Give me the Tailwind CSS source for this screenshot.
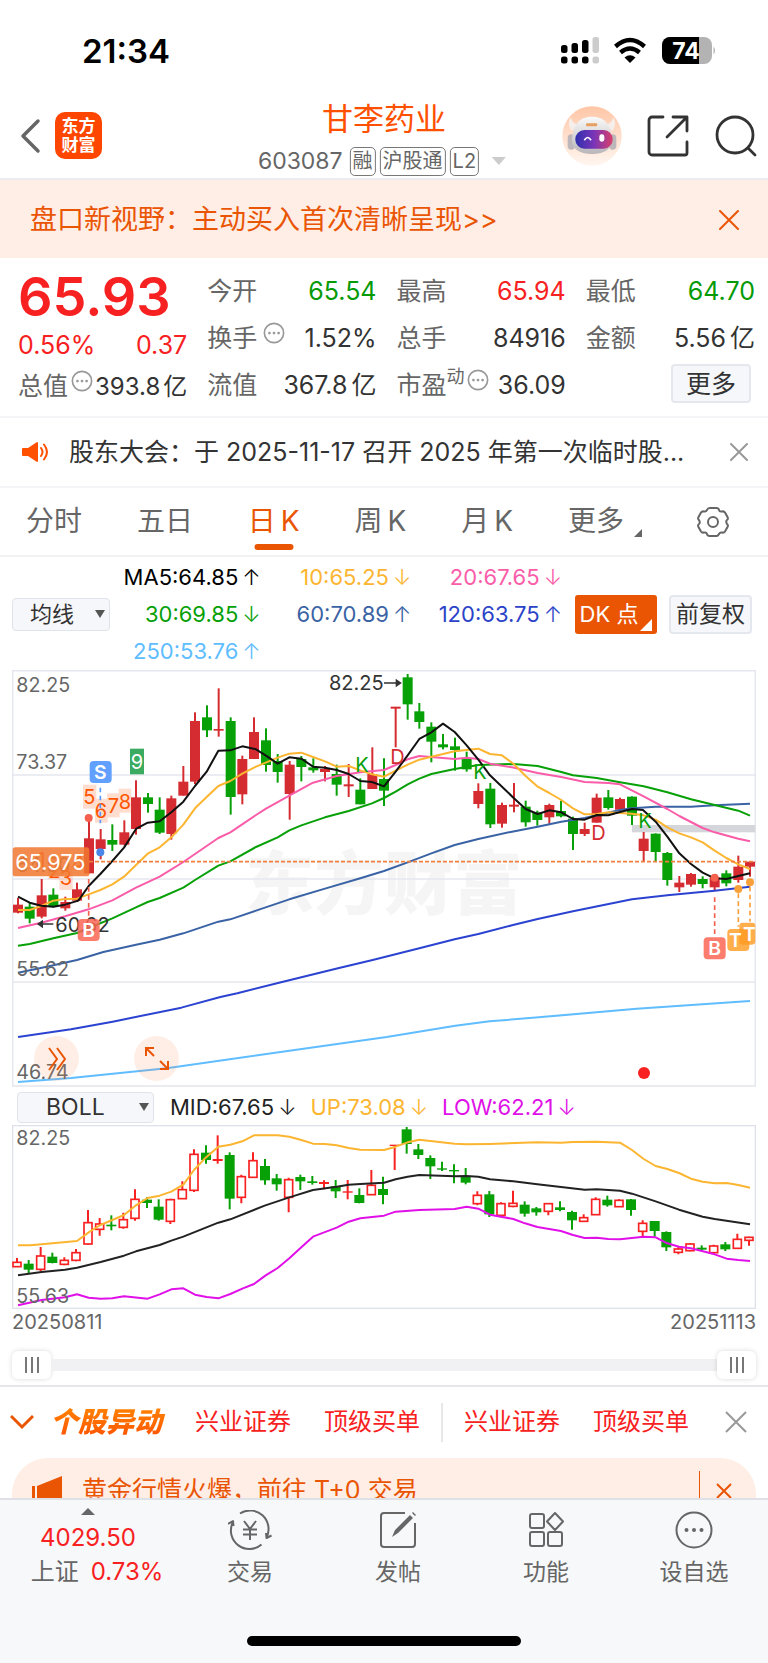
<!DOCTYPE html>
<html lang="zh-CN">
<head>
<meta charset="utf-8">
<meta name="viewport" content="width=device-width, initial-scale=1">
<title>甘李药业 603087</title>
<script src="https://cdn.jsdelivr.net/npm/@tailwindcss/browser@4"></script>
</head>
<body class="bg-white font-['Inter','Noto_Sans_CJK_SC',sans-serif] text-[#333]">

<!-- Status bar -->
<div class="flex h-[95px] items-center justify-between pt-[9px] pr-[52px] pl-[82px]">
  <span class="text-[33px] font-semibold text-black">21:34</span>
  <svg viewBox="0 0 156 30" class="mt-[-2px] w-[156px]" aria-label="信号 Wi-Fi 电量 74%">
    <g fill="#000">
      <rect x="1" y="9" width="6.500" height="8" rx="2.500"/><rect x="11.500" y="7" width="6.500" height="10" rx="2.500"/><rect x="22" y="4" width="6.500" height="13" rx="2.500"/>
      <rect x="1" y="20.500" width="6.500" height="7" rx="2.500"/><rect x="11.500" y="20.500" width="6.500" height="7" rx="2.500"/><rect x="22" y="20.500" width="6.500" height="7" rx="2.500"/>
    </g>
    <g fill="#ccc"><rect x="32.500" y="1" width="6.500" height="16" rx="2.500"/><rect x="32.500" y="20.500" width="6.500" height="7" rx="2.500"/></g>
    <g fill="none" stroke="#000" stroke-width="4.400"><path d="M55.500 10.500Q70 -2.500 84.500 10.500"/><path d="M60.500 16.500Q70 8.500 79.500 16.500"/></g>
    <path d="M64.500 21.500Q70 17 75.500 21.500L70 27Z" fill="#000"/>
    <clipPath id="bat"><rect x="102" y="1" width="50" height="27" rx="8"/></clipPath>
    <g clip-path="url(#bat)"><rect x="102" y="1" width="50" height="27" fill="#b3b3b3"/><rect x="102" y="1" width="37" height="27" fill="#000"/></g>
    <path d="M153.500 10.500Q156.500 14.500 153.500 18.500Z" fill="#b3b3b3"/>
    <text x="126" y="23" text-anchor="middle" font-size="23" font-weight="700" fill="#fff">74</text>
  </svg>
</div>

<!-- Title bar -->
<header class="relative flex h-[85px] items-center justify-between border-b-2 border-[#ececf0] pr-[11px] pb-[2px] pl-[20px]">
  <div class="flex items-center gap-[14px]">
    <button aria-label="返回"><svg viewBox="0 0 21 36" class="w-[21px]" fill="none" stroke="#666" stroke-width="3.500" stroke-linecap="round" stroke-linejoin="round"><path d="M18 3 3 18l15 15"/></svg></button>
    <a href="#" class="flex size-[47px] flex-col items-center justify-center rounded-[10px] bg-[#ff4600] text-[17px] leading-[19px] font-bold text-white"><span>东方</span><span>财富</span></a>
  </div>
  <div class="absolute top-[4px] left-1/2 flex -translate-x-1/2 flex-col items-center">
    <h1 class="text-[31px] leading-[40px] text-[#ff5000]">甘李药业</h1>
    <button class="mt-[3px] flex items-center gap-[4px] pr-[4px] text-[#666]">
      <span class="mr-[3px] text-[23px] leading-[38px]">603087</span>
      <span class="rounded-[5px] border border-[#777] px-[2px] text-[20px] leading-[27px]">融</span>
      <span class="rounded-[5px] border border-[#777] px-[2px] text-[20px] leading-[27px]">沪股通</span>
      <span class="rounded-[5px] border border-[#777] px-[2px] text-[20px] leading-[27px]">L2</span>
      <svg viewBox="0 0 14 8" class="ml-[9px] w-[14px]"><path d="M0 0h14L7 8Z" fill="#ccc"/></svg>
    </button>
  </div>
  <div class="flex items-center">
    <button aria-label="智能助手"><svg viewBox="0 0 180 180" class="w-[60px]">
      <defs><linearGradient id="halo" x2="0" y2="1"><stop stop-color="#ffc6a6"/><stop offset="1" stop-color="#fff6f1"/></linearGradient>
      <linearGradient id="visor"><stop stop-color="#2f2fae"/><stop offset=".5" stop-color="#7a35b8"/><stop offset="1" stop-color="#d8416a"/></linearGradient>
      <linearGradient id="shell" x2="0" y2="1"><stop stop-color="#fafafa"/><stop offset="1" stop-color="#b9b5b9"/></linearGradient></defs>
      <circle cx="90" cy="90" r="89" fill="url(#halo)"/>
      <path d="M26 34q-12 18 2 40l26-16q-24-4-28-24ZM154 34q12 18-2 40l-26-16q24-4 28-24Z" fill="#f5eeea"/>
      <rect x="17" y="85" width="22" height="46" rx="11" fill="#bdb7bb"/><rect x="141" y="85" width="22" height="46" rx="11" fill="#bdb7bb"/>
      <path d="M30 100Q34 32 90 32t60 68q0 44-60 44T30 100Z" fill="url(#shell)"/>
      <rect x="72" y="52" width="34" height="9" rx="4" fill="#e8a060"/>
      <rect x="40" y="72" width="112" height="56" rx="27" fill="url(#visor)"/>
      <path d="M68 101q9-13 18 0" fill="none" stroke="#fff" stroke-width="5" stroke-linecap="round"/><rect x="112" y="85" width="15" height="22" rx="7" fill="#fff"/>
    </svg></button>
    <button aria-label="分享" class="ml-[25px]"><svg viewBox="0 0 42 42" class="w-[42px]" fill="none" stroke="#333" stroke-width="2.800" stroke-linecap="round" stroke-linejoin="round"><path d="M16 2H5a3 3 0 0 0-3 3v32a3 3 0 0 0 3 3h33a2 2 0 0 0 2-2V27M26 2h14v14M40 2 20 22"/></svg></button>
    <button aria-label="搜索" class="ml-[26px]"><svg viewBox="0 0 42 42" class="w-[42px]" fill="none" stroke="#333" stroke-width="2.800" stroke-linecap="round"><circle cx="20" cy="20" r="18"/><path d="m33 33 7 7"/></svg></button>
  </div>
</header>

<!-- Promo strip -->
<div class="flex h-[78px] items-center justify-between bg-[#feeee6] pt-[2px] pr-[29px] pl-[30px] text-[27px] text-[#ea5504]">
  <a href="#">盘口新视野：主动买入首次清晰呈现&gt;&gt;</a>
  <button aria-label="关闭"><svg viewBox="0 0 20 20" class="w-[20px]" stroke="#ea5504" stroke-width="2" stroke-linecap="round"><path d="m1 1 18 18M19 1 1 19"/></svg></button>
</div>

<!-- Quote -->
<section class="grid grid-cols-4 gap-x-[20px] border-b-2 border-[#f5f5f7] pt-[10px] pr-[13px] pb-[7px] pl-[18px] text-[25px] leading-[47px] whitespace-nowrap">
  <div class="text-[#f82121]">
    <div class="text-[54px] leading-[58px] font-semibold">65.93</div>
    <div class="flex justify-between leading-[38px]"><span>0.56%</span><span>0.37</span></div>
    <div class="flex items-center justify-between leading-[45px] text-[#333]"><span class="text-[#666]">总值</span><svg viewBox="0 0 24 24" class="mb-[11px] w-[22px]" fill="#999"><circle cx="12" cy="12" r="10.500" fill="none" stroke="#999" stroke-width="1.800"/><circle cx="7" cy="12" r="1.500"/><circle cx="12" cy="12" r="1.500"/><circle cx="17" cy="12" r="1.500"/></svg><span class="text-[24px]">393.8<span class="ml-[3px]">亿</span></span></div>
  </div>
  <div>
    <div class="flex justify-between"><span class="text-[#666]">今开</span><span class="text-[#069a06]">65.54</span></div>
    <div class="flex items-center"><span class="text-[#666]">换手</span><svg viewBox="0 0 24 24" class="mb-[11px] ml-[6px] w-[22px]" fill="#999"><circle cx="12" cy="12" r="10.500" fill="none" stroke="#999" stroke-width="1.800"/><circle cx="7" cy="12" r="1.500"/><circle cx="12" cy="12" r="1.500"/><circle cx="17" cy="12" r="1.500"/></svg><span class="ml-auto">1.52%</span></div>
    <div class="flex justify-between"><span class="text-[#666]">流值</span><span>367.8<span class="ml-[4px]">亿</span></span></div>
  </div>
  <div>
    <div class="flex justify-between"><span class="text-[#666]">最高</span><span class="text-[#f82121]">65.94</span></div>
    <div class="flex justify-between"><span class="text-[#666]">总手</span><span>84916</span></div>
    <div class="flex items-center"><span class="text-[#666]">市盈</span><span class="mb-[18px] text-[18px] leading-[29px] text-[#666]">动</span><svg viewBox="0 0 24 24" class="mb-[11px] ml-[2px] w-[22px]" fill="#999"><circle cx="12" cy="12" r="10.500" fill="none" stroke="#999" stroke-width="1.800"/><circle cx="7" cy="12" r="1.500"/><circle cx="12" cy="12" r="1.500"/><circle cx="17" cy="12" r="1.500"/></svg><span class="ml-auto">36.09</span></div>
  </div>
  <div>
    <div class="flex justify-between"><span class="text-[#666]">最低</span><span class="text-[#069a06]">64.70</span></div>
    <div class="flex justify-between"><span class="text-[#666]">金额</span><span>5.56<span class="ml-[4px]">亿</span></span></div>
    <div class="flex justify-end pt-[2px] pr-[4px]"><button class="h-[39px] w-[80px] rounded-[4px] border-2 border-[#e4e8ee] bg-[#f6f7fa] leading-[34px]">更多</button></div>
  </div>
</section>

<!-- Notice -->
<div class="flex items-center border-b-2 border-[#f5f5f7] pr-[20px] pl-[21px] leading-[68px]">
  <svg viewBox="0 0 28 22" class="mr-[20px] w-[28px]" fill="#ff5000"><path d="M2 7h5l9-6q1 0 1 1v18q0 1-1 1l-9-6H2q-1 0-1-1V8q0-1 1-1Z"/><path d="M20 7q3 4 0 8M23 3.500q6 7.500 0 15" fill="none" stroke="#ff5000" stroke-width="2" stroke-linecap="round"/></svg>
  <a href="#" class="min-w-0 flex-1 truncate text-[25px]">股东大会：于 2025-11-17 召开 2025 年第一次临时股...</a>
  <button aria-label="关闭通知"><svg viewBox="0 0 18 18" class="w-[18px]" stroke="#999" stroke-width="2" stroke-linecap="round"><path d="m1 1 16 16M17 1 1 17"/></svg></button>
</div>

<!-- Period tabs -->
<nav class="flex items-center justify-between border-b-2 border-[#f3f3f5] pr-[39px] pl-[26px] text-[28px] leading-[67px] text-[#666]">
  <button>分时</button>
  <button>五日</button>
  <button class="relative flex gap-[5px] text-[#ea5504]">日<span>K</span><span class="absolute bottom-[5px] left-1/2 h-[6px] w-[39px] -translate-x-1/2 rounded-full bg-[#ea5504]"></span></button>
  <button class="flex gap-[5px]">周<span>K</span></button>
  <button class="flex gap-[5px]">月<span>K</span></button>
  <button class="flex items-center">更多<svg viewBox="0 0 9 9" class="mt-[22px] ml-[10px] w-[8px]"><path d="M9 0v9H0Z" fill="#666"/></svg></button>
  <button aria-label="设置"><svg viewBox="0 0 32 32" class="w-[32px]" fill="none" stroke="#666" stroke-width="2" stroke-linejoin="round"><path d="M12.500 2h7q2 0 2.500 2t3 1.500q2-.500 3 1l2.500 4.500q1 2-.500 3t0 4q1.500 1 .500 3L28 25.500q-1 1.500-3 1t-3 1.500-2.500 2h-7q-2 0-2.500-2t-3-1.500q-2 .500-3-1L1.500 21q-1-2 .500-3t0-4q-1.500-1-.500-3L4 6.500q1-1.500 3-1T10 4t2.500-2Z"/><circle cx="16" cy="16" r="5"/></svg></button>
</nav>

<!-- Moving averages -->
<section class="flex items-center pt-[2px] pr-[16px] pl-[12px] text-[22px]">
  <label class="relative"><span class="sr-only">主图指标</span>
    <select class="block h-[33px] w-[98px] appearance-none rounded-[4px] border border-[#dfe3ea] bg-[#f6f7fa] pl-[17px] leading-[31px]"><option>均线</option></select>
    <svg viewBox="0 0 10 8" class="pointer-events-none absolute top-[12px] right-[5px] w-[10px]"><path d="M0 0h10L5 8Z" fill="#555"/></svg>
  </label>
  <div class="grid flex-1 grid-cols-3 text-right leading-[37px] whitespace-nowrap">
    <span class="text-black">MA5:64.85<span class="ml-[4px] font-light">↑</span></span><span class="text-[#fcb530]">10:65.25<span class="ml-[4px] font-light">↓</span></span><span class="text-[#f95ca8]">20:67.65<span class="ml-[4px] font-light">↓</span></span>
    <span class="text-[#07a007]">30:69.85<span class="ml-[4px] font-light">↓</span></span><span class="text-[#3a63a5]">60:70.89<span class="ml-[4px] font-light">↑</span></span><span class="text-[#2b43c8]">120:63.75<span class="ml-[4px] font-light">↑</span></span>
    <span class="text-[#60bdff]">250:53.76<span class="ml-[4px] font-light">↑</span></span>
  </div>
  <button class="relative ml-[13px] h-[39px] w-[82px] rounded-[3px] bg-[#ea5504] pr-[14px] whitespace-nowrap text-white">DK 点<svg viewBox="0 0 12 12" class="absolute right-[5px] bottom-[3px] w-[12px]"><path d="M12 0v12H0Z" fill="#fff"/></svg></button>
  <button class="ml-[12px] h-[39px] w-[83px] rounded-[4px] border-2 border-[#e4e8ee] bg-[#f6f7fa] text-[23px] whitespace-nowrap">前复权</button>
</section>

<!-- Daily candles -->
<section class="relative mx-[12px]">
  <svg viewBox="36 30 2232 1250" class="block w-full" id="kline" role="img" aria-label="日K线图">
    <g fill="#f5f5f5" font-family="'Noto Sans CJK SC'"><text x="735" y="748" font-size="208" font-weight="900">东方财富</text></g>
    <g stroke="#e6e8ef" stroke-width="5" fill="none"><path d="M36 345H2268M36 657H2268M36 966H2268"/><rect x="38" y="32" width="2228" height="1246"/></g>
    <rect x="1896" y="495" width="370" height="22" fill="#d4d6db"/>
    <g data-candles></g><g data-lines></g>
    <path d="M267 605H2266" stroke="#f08040" stroke-width="5" stroke-dasharray="12 6"/>
    <g fill="#666" font-size="59"><text x="49" y="97">82.25</text><text x="49" y="327">73.37</text><text x="49" y="637">64.50</text><text x="49" y="948">55.62</text><text x="49" y="1257">46.74</text></g>
    <g fill="#ff7a45" opacity=".25"><rect x="249" y="374" width="40" height="72"/><rect x="285" y="416" width="38" height="72"/><rect x="321" y="400" width="38" height="72"/><rect x="356" y="386" width="38" height="72"/><rect x="145" y="590" width="38" height="68"/><rect x="178" y="618" width="40" height="72"/></g>
    <g fill="#ff5500" font-size="60"><text x="250" y="432">5</text><text x="284" y="474">6</text><text x="323" y="458">7</text><text x="356" y="447">8</text><text x="112" y="622">1</text><text x="145" y="655">2</text><text x="179" y="675">3</text><text x="215" y="630">4</text></g>
    <rect x="390" y="266" width="42" height="77" fill="#3cab62"/><text x="411" y="326" text-anchor="middle" font-size="60" fill="#fff">9</text>
    <g fill="#333" font-size="60"><text x="987" y="91">82.25</text><text x="166" y="815">60.62</text></g>
    <g stroke="#333" stroke-width="4" fill="#333"><path d="M1152 69h50m-13-9 13 9-13 9ZM160 792h-46m13-9-13 9 13 9Z"/></g>
    <path d="M301 383V490" stroke="#5b9bff" stroke-width="5" stroke-dasharray="14 10"/>
    <g stroke="#f5604f" stroke-width="5" stroke-dasharray="14 10"><path d="M266 657V775M2144 712V825"/></g>
    <g stroke="#f8a13a" stroke-width="5" stroke-dasharray="14 10"><path d="M2215 700V800M2250 680V785"/></g>
    <g fill="#f5604f"><circle cx="266" cy="474" r="12"/><circle cx="2144" cy="653" r="12"/></g><circle cx="301" cy="577" r="12" fill="#4a86e8"/>
    <g fill="#f8a13a"><circle cx="2215" cy="687" r="12"/><circle cx="2250" cy="667" r="12"/></g>
    <rect x="269" y="303" width="66" height="66" rx="12" fill="#62a0ff"/>
    <g fill="#fb6555" opacity=".85"><rect x="233" y="777" width="66" height="66" rx="12"/><rect x="2111" y="832" width="66" height="66" rx="12"/></g>
    <g fill="#ff9a1f"><rect x="2182" y="807" width="66" height="66" rx="12" opacity=".8"/><rect x="2218" y="788" width="48" height="66" rx="10" opacity=".8"/></g>
    <g fill="#fff" font-size="58" font-weight="600" text-anchor="middle"><text x="301" y="358">S</text><text x="266" y="831">B</text><text x="2144" y="886">B</text><text x="2206" y="861">T</text><text x="2248" y="842">T</text></g>
    <g font-size="60"><g fill="#07a007"><text x="1066" y="337">K</text><text x="1420" y="356">K</text><text x="1915" y="503">K</text></g><g fill="#d42c30"><text x="1171" y="312">D</text><text x="1774" y="541">D</text></g></g>
    <rect x="38" y="562" width="230" height="87" rx="8" fill="#f07830" opacity=".86"/><text x="151" y="629" text-anchor="middle" font-size="65" fill="#fff">65.975</text>
    <circle cx="1932" cy="1239" r="18" fill="#f82121"/>
  </svg>
  <button aria-label="展开" class="absolute bottom-[6px] left-[22px] size-[45px] rounded-full bg-[#f9905a]/15"><svg viewBox="0 0 45 45" fill="none" stroke="#ea5504" stroke-width="2"><path d="m15 12 8 11-8 11M23 12l8 11-8 11"/></svg></button>
  <button aria-label="全屏" class="absolute bottom-[6px] left-[122px] size-[45px] rounded-full bg-[#f9905a]/15"><svg viewBox="0 0 45 45" fill="none" stroke="#ea5504" stroke-width="2"><path d="M12 20v-8h8M12 12l8 8M34 25v8h-8M34 33l-8-8"/></svg></button>
</section>

<!-- BOLL -->
<section class="flex items-center gap-[14px] px-[17px] pt-[3px] text-[22px] leading-[35px] whitespace-nowrap">
  <label class="relative mr-[2px]"><span class="sr-only">副图指标</span>
    <select class="block h-[31px] w-[137px] appearance-none rounded-[4px] border border-[#dfe3ea] bg-[#f6f7fa] pl-[28px] text-[23px] leading-[29px]"><option>BOLL</option></select>
    <svg viewBox="0 0 10 8" class="pointer-events-none absolute top-[11px] right-[5px] w-[10px]"><path d="M0 0h10L5 8Z" fill="#555"/></svg>
  </label>
  <span class="text-[#222]">MID:67.65<span class="ml-[4px] font-light">↓</span></span><span class="text-[#fcb530]">UP:73.08<span class="ml-[4px] font-light">↓</span></span><span class="text-[#e010e8]">LOW:62.21<span class="ml-[4px] font-light">↓</span></span>
</section>
<section class="mx-[12px]">
  <svg viewBox="36 45 2232 552" class="block w-full" id="boll" role="img" aria-label="BOLL 指标图">
    <rect x="38" y="47" width="2228" height="548" stroke="#dfe2ea" stroke-width="4" fill="none"/>
    <g data-candles></g><g data-lines></g>
    <g fill="#666" font-size="59"><text x="49" y="105">82.25</text><text x="49" y="580">55.63</text></g>
  </svg>
  <div class="flex justify-between text-[20px] leading-[26px] text-[#666]"><span>20250811</span><span>20251113</span></div>
</section>

<!-- Range slider -->
<div class="mx-[12px] mt-[11px] flex h-[39px] items-center">
  <button aria-label="起始日期" class="flex h-[28px] w-[39px] items-center justify-center gap-[4px] rounded-[6px] bg-white shadow-[0_0_5px_rgba(0,0,0,0.15)]"><i class="h-[16px] w-[2px] bg-[#777]"></i><i class="h-[16px] w-[2px] bg-[#777]"></i><i class="h-[16px] w-[2px] bg-[#777]"></i></button>
  <div class="h-[12px] flex-1 bg-[#f1f1f4]"></div>
  <button aria-label="结束日期" class="flex h-[28px] w-[39px] items-center justify-center gap-[4px] rounded-[6px] bg-white shadow-[0_0_5px_rgba(0,0,0,0.15)]"><i class="h-[16px] w-[2px] bg-[#777]"></i><i class="h-[16px] w-[2px] bg-[#777]"></i><i class="h-[16px] w-[2px] bg-[#777]"></i></button>
</div>

<!-- Unusual moves -->
<div class="flex h-[73px] items-center border-t-2 border-[#e4e6ea] pr-[21px] pl-[10px] text-[24px] whitespace-nowrap text-[#f82121]">
  <button aria-label="收起"><svg viewBox="0 0 24 16" class="w-[24px]" fill="none" stroke="#ea5504" stroke-width="3"><path d="m1 2 11 11L23 2"/></svg></button>
  <h2 class="ml-[16px] bg-gradient-to-b from-[#ff8a00] to-[#ff4600] bg-clip-text pr-[4px] text-[28px] font-black text-transparent italic">个股异动</h2>
  <a href="#" class="ml-[29px]">兴业证券</a>
  <a href="#" class="ml-[33px]">顶级买单</a>
  <i class="mx-[21px] h-[39px] w-[2px] bg-[#e8e8e8]"></i>
  <a href="#">兴业证券</a>
  <a href="#" class="ml-[33px]">顶级买单</a>
  <button aria-label="关闭异动" class="ml-auto"><svg viewBox="0 0 22 22" class="w-[22px]" stroke="#999" stroke-width="2"><path d="m1 1 20 20M21 1 1 21"/></svg></button>
</div>
<div class="mx-[12px] h-[40px] overflow-hidden rounded-t-[36px] bg-[#feeee6]">
  <div class="flex h-[66px] items-center pr-[24px] pl-[20px] text-[25px] text-[#ea5504]">
    <svg viewBox="0 0 30 30" class="mr-[20px] w-[30px]" fill="#ea5504"><path d="M0 10h3v14H0ZM5 10 30 0v30H10v-5H5Z"/></svg>
    <a href="#" class="flex-1">黄金行情火爆，前往 T+0 交易</a>
    <i class="mr-[16px] h-[40px] w-px bg-[#ea5504]"></i>
    <button aria-label="关闭广告"><svg viewBox="0 0 16 16" class="w-[16px]" stroke="#ea5504" stroke-width="2"><path d="m1 1 14 14M15 1 1 15"/></svg></button>
  </div>
</div>

<!-- Bottom bar -->
<footer class="border-t-2 border-[#dfe1e6] bg-[#f6f8fa] pb-[17px]">
  <nav class="grid grid-cols-[176fr_148fr_148fr_148fr_148fr] text-[23px] leading-[30px] text-[#666]">
    <a href="#" class="flex flex-col items-center pt-[8px] text-[24px] text-[#f82121]"><svg viewBox="0 0 14 7" class="w-[14px]"><path d="M7 0l7 7H0Z" fill="#666"/></svg><span class="mt-[6px] leading-[34px]">4029.50</span><span class="pl-[18px] leading-[34px]"><span class="text-[#666]">上证</span><span class="ml-[12px]">0.73%</span></span></a>
    <a href="#" class="flex flex-col items-center gap-[7px] pt-[10px]"><svg viewBox="0 0 44 40" class="w-[44px]" fill="none" stroke="#666" stroke-width="2" stroke-linejoin="round"><path d="M12 3.500A18.500 18.500 0 0 1 38.500 27.500M33.500 34.500A18.500 18.500 0 0 1 4.500 13M0 14l5-3 .5 5M43.500 25.500l-5 2.500-.5-5M16 11l6 8 6-8M22 19v11M15 19.500h14M15 24.500h14"/></svg>交易</a>
    <a href="#" class="flex flex-col items-center gap-[7px] pt-[10px]"><svg viewBox="0 0 40 40" class="w-[40px]" fill="none" stroke="#666" stroke-width="2"><path d="M27 3H6a3 3 0 0 0-3 3v28a3 3 0 0 0 3 3h28a3 3 0 0 0 3-3V13"/><path d="m14 27 3-7L32 5l3 3-15 15ZM34 3l1-1 3 3-1 1Z" fill="#666" stroke="none"/></svg>发帖</a>
    <a href="#" class="flex flex-col items-center gap-[7px] pt-[10px]"><svg viewBox="0 0 40 40" class="w-[40px]" fill="none" stroke="#666" stroke-width="2"><rect x="4" y="4" width="14" height="14" rx="2"/><rect x="4" y="22" width="14" height="14" rx="2"/><rect x="22" y="22" width="14" height="14" rx="2"/><path d="m29 3 8 8.500-8 8.500-8-8.500Z" stroke-linejoin="round"/></svg>功能</a>
    <a href="#" class="flex flex-col items-center gap-[7px] pt-[10px]"><svg viewBox="0 0 40 40" class="w-[40px]" fill="#666"><circle cx="20" cy="20" r="17.500" fill="none" stroke="#666" stroke-width="2"/><circle cx="12.500" cy="20" r="2"/><circle cx="20" cy="20" r="2"/><circle cx="27.500" cy="20" r="2"/></svg>设自选</a>
  </nav>
  <div class="mx-auto mt-[47px] h-[10px] w-[274px] rounded-full bg-black"></div>
</footer>

<script>
const SVG = 'http://www.w3.org/2000/svg';
function el(parent, tag, attrs) {
  const node = document.createElementNS(SVG, tag);
  for (const key in attrs) node.setAttribute(key, attrs[key]);
  parent.appendChild(node);
}
// Each row: high, body top, body bottom, low, direction (1 = up, 0 = down)
const daily = [[714,734,758,760,1],[728,740,776,790,0],[657,706,770,775,1],[685,704,738,742,0],[710,726,745,752,1],[668,688,722,726,1],[474,535,640,640,1],[507,538,567,598,1],[493,540,554,573,0],[481,517,554,556,1],[361,412,507,524,1],[399,412,432,458,0],[412,449,518,522,0],[407,415,522,539,1],[318,365,407,407,1],[157,183,365,372,1],[136,172,211,231,0],[85,207,212,230,1],[172,183,411,464,0],[287,297,403,433,1],[172,216,297,297,1],[205,241,315,335,0],[282,303,336,368,0],[303,314,402,479,1],[288,297,321,364,0],[295,322,331,338,0],[318,327,336,364,1],[314,342,374,407,0],[312,373,379,411,1],[355,389,433,433,0],[262,342,387,387,1],[295,357,392,438,0],[142,140,146,262,1],[42,52,133,179,0],[129,154,186,206,0],[187,200,245,307,0],[222,253,262,268,0],[233,259,270,332,0],[275,294,328,335,0],[370,393,432,445,1],[369,386,493,504,0],[428,435,491,503,1],[369,434,440,457,1],[422,440,487,500,0],[452,458,480,497,0],[431,435,472,491,1],[422,453,469,472,0],[470,476,522,570,0],[488,507,522,528,1],[401,413,488,488,1],[390,412,444,449,0],[413,417,449,453,1],[409,410,467,495,0],[516,536,573,603,1],[520,521,576,603,0],[576,579,660,677,0],[648,668,682,696,1],[639,642,674,680,1],[649,657,672,685,0],[645,652,682,692,1],[631,640,670,679,0],[587,620,660,668,1],[605,605,620,650,1]];
const boll = [[444,457,470,470,1],[450,461,479,490,0],[411,438,478,484,1],[428,440,459,460,0],[442,451,463,466,1],[417,428,451,454,1],[300,338,402,404,1],[324,342,358,377,1],[316,344,349,361,0],[308,329,352,356,1],[238,268,325,332,1],[262,269,279,294,0],[268,290,329,332,0],[266,269,334,342,1],[214,239,266,267,1],[118,133,241,246,1],[106,128,150,161,0],[76,147,153,161,1],[127,135,266,298,0],[194,200,262,280,1],[127,152,202,203,1],[147,168,211,224,0],[192,205,223,242,0],[203,209,262,307,1],[194,201,214,240,0],[198,214,219,224,0],[211,216,222,238,1],[210,229,244,264,0],[210,244,248,268,1],[235,255,279,280,0],[180,226,254,254,1],[200,237,255,283,0],[106,104,108,180,1],[51,58,102,131,0],[102,118,135,147,0],[136,144,169,207,0],[155,175,179,183,0],[163,180,184,220,0],[174,200,218,223,0],[244,256,281,286,1],[243,253,313,321,0],[277,281,316,318,1],[242,280,289,292,1],[274,284,311,320,0],[291,295,307,317,0],[279,281,304,316,1],[274,292,300,304,0],[302,306,331,359,0],[313,323,334,334,1],[262,268,314,315,1],[257,269,286,290,0],[268,271,290,291,1],[267,268,300,317,0],[331,340,364,380,1],[333,333,363,380,0],[364,366,412,423,0],[409,417,427,433,1],[400,402,422,424,1],[406,413,419,423,0],[404,408,428,431,1],[396,403,418,423,0],[371,388,415,416,1],[380,382,391,407,1]];
function candles(root, rows, x0, hollow) {
  const g = root.querySelector('[data-candles]');
  rows.forEach(([h, t, b, l, up], i) => {
    const x = Math.round(x0 + i * 35.42), c = up ? (hollow ? '#f82121' : '#d42c30') : '#07a007';
    if (up && hollow && b - t > 7) {
      el(g, 'path', { d: `M${x} ${h}V${t}M${x} ${b}V${l}`, stroke: c, 'stroke-width': 6 });
      el(g, 'rect', { x: x - 12, y: t, width: 24, height: b - t, fill: 'none', stroke: c, 'stroke-width': 5 });
    } else {
      el(g, 'path', { d: `M${x} ${h}V${l}`, stroke: c, 'stroke-width': 6 });
      el(g, 'rect', { x: x - 15, y: t, width: 30, height: b - t, fill: c });
    }
  });
}
function lines(root, list) {
  const g = root.querySelector('[data-lines]');
  list.forEach(([c, points]) => el(g, 'polyline', { points, fill: 'none', stroke: c, 'stroke-width': 6, 'stroke-linejoin': 'round' }));
}
const k = document.getElementById('kline'), b = document.getElementById('boll');
candles(k, daily, 54, false);
candles(b, boll, 51, true);
lines(k, [
  ['#2b43d0', '54,1131 213,1108 338,1085 544,1043 661,1011 712,1000 837,968 1014,925 1118,900 1258,865 1364,838 1435,822 1536,796 1613,777 1719,754 1896,718 2002,706 2144,692 2250,680'],
  ['#60bdff', '54,1266 213,1254 500,1225 778,1185 1160,1131 1366,1097 1469,1084 1616,1072 1910,1046 2250,1023'],
  ['#3a63a5', '54,938 140,920 231,900 310,876 408,854 479,839 550,820 655,785 691,778 768,752 868,718 975,686 1081,655 1152,633 1223,607 1294,580 1364,555 1435,537 1536,515 1613,500 1684,485 1754,474 1860,450 1896,445 1967,440 2073,440 2144,436 2250,431'],
  ['#07a007', '54,857 89,852 160,835 231,819 266,804 337,775 408,742 443,726 479,714 550,683 585,660 655,617 691,604 768,561 833,532 868,511 904,496 975,472 1046,453 1116,430 1152,414 1187,395 1223,373 1258,356 1294,342 1364,327 1435,315 1541,312 1613,318 1684,336 1719,346 1790,354 1860,367 1931,379 2002,397 2073,418 2144,435 2215,452 2250,467'],
  ['#f95ca8', '54,804 124,788 195,769 266,748 337,721 408,683 479,650 550,606 620,558 655,534 691,517 768,465 798,446 868,407 939,368 1010,348 1081,337 1152,330 1187,315 1223,298 1258,288 1364,297 1400,293 1435,297 1470,311 1536,322 1613,339 1684,351 1754,366 1825,369 1860,373 1931,409 2002,447 2038,468 2108,504 2144,517 2215,536 2250,544'],
  ['#fcb530', '54,750 89,750 124,738 160,722 195,717 231,716 266,703 301,690 337,673 372,650 408,615 443,581 479,562 514,532 550,494 585,445 620,411 655,378 691,363 727,341 768,320 833,293 868,281 904,278 939,291 975,304 1010,320 1046,318 1081,331 1116,343 1152,350 1187,332 1223,314 1258,299 1294,290 1364,274 1435,266 1470,282 1506,286 1541,312 1577,348 1613,380 1648,399 1684,420 1719,445 1754,463 1790,462 1825,457 1896,461 1931,466 1967,479 2002,502 2038,520 2073,532 2108,547 2144,572 2179,594 2215,613 2250,627'],
  ['#111', '54,710 89,728 124,737 160,740 195,734 235,722 266,678 301,642 337,603 372,563 408,507 443,488 479,484 514,457 550,425 585,378 620,335 655,272 691,271 727,259 768,268 798,287 833,311 868,292 904,296 939,320 975,323 1010,330 1046,342 1081,363 1116,366 1152,379 1187,335 1223,286 1258,237 1294,217 1329,191 1364,216 1400,256 1435,299 1470,346 1506,380 1541,414 1577,447 1613,462 1648,451 1684,457 1719,477 1754,479 1790,465 1825,466 1860,456 1896,447 1929,450 1967,485 2002,530 2038,580 2073,612 2108,638 2144,655 2179,657 2215,648 2250,640']
]);
lines(b, [
  ['#fcb530', '54,406 90,406 125,403 231,393 266,367 301,345 337,330 372,315 408,286 443,264 479,257 514,245 550,224 582,180 617,143 655,110 691,104 727,94 762,76 833,76 868,80 904,90 939,101 975,102 1010,106 1046,114 1081,119 1152,120 1187,110 1223,97 1258,89 1364,101 1399,103 1470,102 1612,97 1683,98 1719,96 1789,95 1860,98 1896,120 1931,147 1967,168 2002,177 2037,189 2073,206 2108,215 2144,220 2180,219 2215,225 2250,233'],
  ['#222', '54,496 125,486 195,479 231,473 302,456 372,437 408,424 479,405 514,392 550,380 655,338 691,328 794,287 868,262 939,240 1010,230 1046,224 1081,222 1152,218 1187,208 1223,200 1258,195 1364,199 1399,198 1435,200 1470,208 1540,214 1612,223 1754,239 1790,238 1860,242 1896,251 1967,274 2037,299 2108,320 2144,327 2250,343'],
  ['#e010e8', '54,586 125,570 195,562 231,553 266,563 302,566 337,565 372,559 443,566 479,553 514,538 550,535 585,554 620,561 655,565 691,552 727,536 762,522 797,496 833,474 868,445 904,412 939,380 1010,353 1046,335 1081,325 1152,317 1187,305 1258,300 1364,297 1400,290 1435,296 1470,314 1540,327 1575,340 1612,351 1683,363 1719,375 1754,384 1790,383 1825,387 1860,388 1931,380 1967,382 2002,400 2037,410 2073,415 2144,433 2180,446 2215,450 2250,453']
]);
</script>
</body>
</html>
